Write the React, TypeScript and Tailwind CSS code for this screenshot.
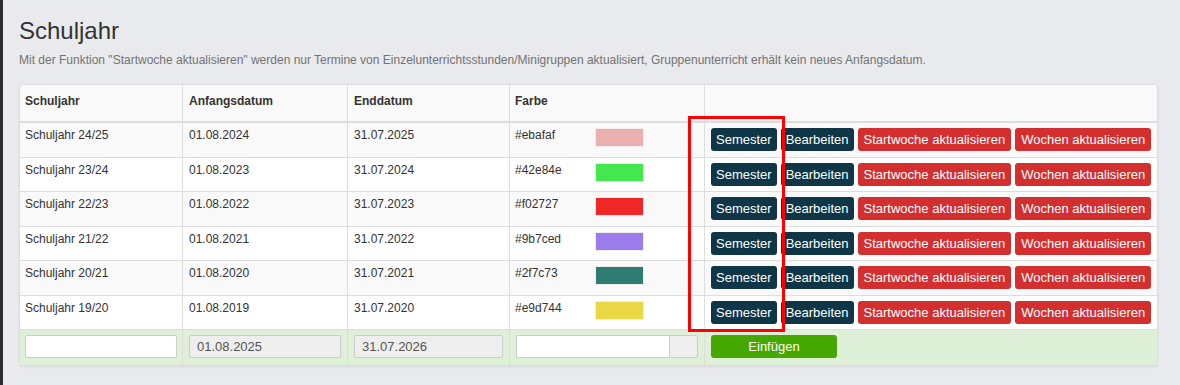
const years = [
  { name: "Schuljahr 24/25", start: "01.08.2024", end: "31.07.2025", color: "#ebafaf" },
  { name: "Schuljahr 23/24", start: "01.08.2023", end: "31.07.2024", color: "#42e84e" },
  { name: "Schuljahr 22/23", start: "01.08.2022", end: "31.07.2023", color: "#f02727" },
  { name: "Schuljahr 21/22", start: "01.08.2021", end: "31.07.2022", color: "#9b7ced" },
  { name: "Schuljahr 20/21", start: "01.08.2020", end: "31.07.2021", color: "#2f7c73" },
  { name: "Schuljahr 19/20", start: "01.08.2019", end: "31.07.2020", color: "#e9d744" },
];

const cols = "grid grid-cols-[162px_165px_162px_195px_1fr]";

const App = () => {
  return (
    <div className="flex min-h-[385px] bg-[#e9eaed] text-[#333] font-['Liberation_Sans',Arial,sans-serif]">
      <div className="w-[3px] shrink-0 bg-[#2d2d2d]"></div>
      <main className="flex-1 pl-[16px] pr-[22px]">
        <h1 className="pt-[18px] text-[24px] leading-[26px] font-normal text-[#333]">Schuljahr</h1>
        <p className="mt-[8px] text-[12px] leading-[17px] text-[#737373]">
          Mit der Funktion "Startwoche aktualisieren" werden nur Termine von Einzelunterrichtsstunden/Minigruppen aktualisiert, Gruppenunterricht erhält kein neues Anfangsdatum.
        </p>

        <div className="relative mt-[15px] border border-[#dddddd] rounded-[4px] bg-white shadow-[0_1px_2px_rgba(0,0,0,0.08)] text-[12px] leading-[17px]">
          <div className={`${cols} h-[38px] bg-[#f9f9f9] border-b-2 border-[#dddddd] font-bold rounded-t-[4px]`}>
            <div className="pl-[5px] pt-[8px]">Schuljahr</div>
            <div className="pl-[6px] pt-[8px] border-l border-[#dddddd]">Anfangsdatum</div>
            <div className="pl-[6px] pt-[8px] border-l border-[#dddddd]">Enddatum</div>
            <div className="pl-[5px] pt-[8px] border-l border-[#dddddd]">Farbe</div>
            <div className="border-l border-[#dddddd]"></div>
          </div>

          {years.map((y, i) => (
            <div
              key={y.name}
              className={`${cols} h-[34.5px] border-b border-[#dddddd] ${i % 2 === 0 ? "bg-[#f9f9f9]" : "bg-white"}`}
            >
              <div className="pl-[5px] pt-[4px]">{y.name}</div>
              <div className="pl-[6px] pt-[4px] border-l border-[#dddddd]">{y.start}</div>
              <div className="pl-[6px] pt-[4px] border-l border-[#dddddd]">{y.end}</div>
              <div className="flex items-start pl-[5px] border-l border-[#dddddd]">
                <span className="w-[80px] pt-[4px]">{y.color}</span>
                <span
                  className="mt-[5px] w-[49px] h-[19px] border border-[#eeeeee]"
                  style={{ backgroundColor: y.color }}
                ></span>
              </div>
              <div className="flex items-start gap-[4px] pl-[6px] pt-[5px] border-l border-[#dddddd] text-[13px] text-white">
                <button className="h-[23px] px-[5px] leading-[23px] rounded-[3px] bg-[#0e3646]">Semester</button>
                <button className="h-[23px] px-[5px] leading-[23px] rounded-[3px] bg-[#0e3646]">Bearbeiten</button>
                <button className="h-[23px] px-[6px] leading-[23px] rounded-[3px] bg-[#d32f2f]">Startwoche aktualisieren</button>
                <button className="h-[23px] px-[6px] leading-[23px] rounded-[3px] bg-[#d32f2f]">Wochen aktualisieren</button>
              </div>
            </div>
          ))}

          <div className={`${cols} h-[35px] bg-[#dff0d8] rounded-b-[4px] text-[13px]`}>
            <div className="px-[5px] pt-[5px]">
              <input className="w-full h-[23px] border border-[#cccccc] rounded-[2px] bg-white px-[7px] outline-none" />
            </div>
            <div className="px-[6px] pt-[5px] border-l border-[#dddddd]">
              <input
                disabled
                value="01.08.2025"
                readOnly
                className="w-full h-[23px] border border-[#cccccc] rounded-[2px] bg-[#eeeeee] px-[7px] text-[#555]"
              />
            </div>
            <div className="px-[6px] pt-[5px] border-l border-[#dddddd]">
              <input
                disabled
                value="31.07.2026"
                readOnly
                className="w-full h-[23px] border border-[#cccccc] rounded-[2px] bg-[#eeeeee] px-[7px] text-[#555]"
              />
            </div>
            <div className="flex px-[6px] pt-[5px] border-l border-[#dddddd]">
              <input className="flex-1 min-w-0 h-[23px] border border-[#cccccc] rounded-l-[2px] bg-white px-[7px] outline-none" />
              <span className="w-[28px] h-[23px] border border-l-0 border-[#cccccc] rounded-r-[3px] bg-[#eeeeee]"></span>
            </div>
            <div className="pl-[6px] pt-[5px] border-l border-[#dddddd]">
              <button className="w-[126px] h-[23px] leading-[23px] rounded-[3px] bg-[#44a800] text-white">Einfügen</button>
            </div>
          </div>

          <div className="absolute left-[668px] top-[31px] w-[97px] h-[216px] border-[3px] border-[#ff0000] pointer-events-none"></div>
        </div>
      </main>
    </div>
  );
};

export default App;
